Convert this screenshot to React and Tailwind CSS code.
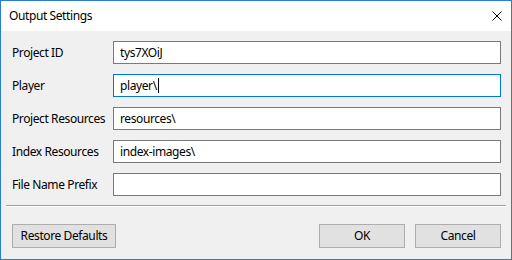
const fields = [
  { label: "Project ID", value: "tys7XOiJ" },
  { label: "Player", value: "player\\", focused: true },
  { label: "Project Resources", value: "resources\\" },
  { label: "Index Resources", value: "index-images\\" },
  { label: "File Name Prefix", value: "" },
];

const Button = ({ title, className }) => (
  <div
    className={`h-[24px] flex items-center justify-center bg-[#e1e1e1] border border-[#adadad] text-black ${className}`}
  >
    {title}
  </div>
);

const App = () => {
  return (
    <div
      className="w-[512px] h-[260px] flex flex-col bg-[#f0f0f0] border border-[#2b7cd3] text-[12px] text-black"
      style={{ fontFamily: '"Noto Sans", sans-serif', letterSpacing: "-0.4px" }}
    >
      {/* title bar */}
      <div className="h-[30px] bg-white flex items-center justify-between pl-[8px] pr-[9px]">
        <span className="text-[12px]">Output Settings</span>
        <svg width="10" height="10" viewBox="0 0 10 10">
          <path d="M0.5 0.5 L9.5 9.5 M9.5 0.5 L0.5 9.5" stroke="#000" strokeWidth="1" />
        </svg>
      </div>

      {/* fields */}
      <div className="flex flex-col gap-[10px] pt-[10px] pl-[11px] pr-[10px]">
        {fields.map((f) => (
          <div key={f.label} className="flex items-center h-[23px]">
            <div className="w-[101px] leading-none">{f.label}</div>
            <div
              className={`flex-1 h-[23px] bg-white flex items-center px-[6px] border ${
                f.focused ? "border-[#0078d7]" : "border-[#7a7a7a]"
              }`}
            >
              <span>{f.value}</span>
              {f.focused && <span className="w-px h-[15px] bg-black ml-[1px]" />}
            </div>
          </div>
        ))}
      </div>

      {/* separator */}
      <div className="mx-[5px] mt-[9px] h-px bg-[#a0a0a0]" />
      <div className="mx-[5px] h-px bg-white" />

      {/* buttons */}
      <div className="flex items-center pt-[17px] pl-[11px] pr-[10px]">
        <Button title="Restore Defaults" className="w-[104px]" />
        <div className="flex-1" />
        <div className="flex gap-[10px]">
          <Button title="OK" className="w-[86px]" />
          <Button title="Cancel" className="w-[86px]" />
        </div>
      </div>
    </div>
  );
};

export default App;
